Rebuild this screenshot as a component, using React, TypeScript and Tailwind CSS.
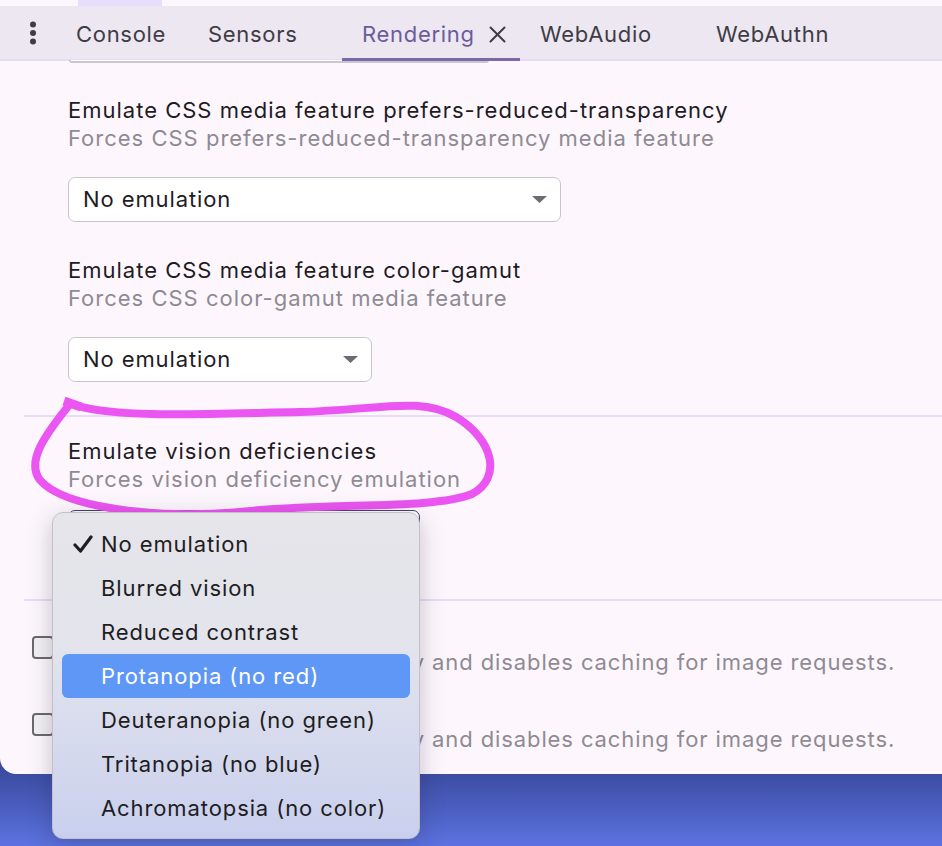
import React from "react";

const font = { fontFamily: "Inter, 'Liberation Sans', sans-serif" };

function Select({ width, focused }: { width: string; focused?: boolean }) {
  return (
    <div
      className={`${width} h-[45px] rounded-[7px] border ${
        focused ? "border-[#4b3f6e]" : "border-[#c9c5cc]"
      } bg-white flex items-center justify-between pl-[14px] pr-[13px]`}
    >
      <span className="text-[22px] text-[#1f1b24] tracking-[0.9px]">No emulation</span>
      <svg width="15" height="8" viewBox="0 0 15 8">
        <path d="M0 0 L15 0 L7.5 7 Z" fill="#6f6b73" />
      </svg>
    </div>
  );
}

function Heading({ title, sub }: { title: string; sub: string }) {
  return (
    <div className="flex flex-col">
      <div className="text-[22px] leading-[28px] text-[#1f1b24] tracking-[1px] whitespace-nowrap">{title}</div>
      <div className="text-[22px] leading-[28px] text-[#8f8a94] tracking-[1px] whitespace-nowrap">{sub}</div>
    </div>
  );
}

function CheckRow({ title, sub }: { title: string; sub: string }) {
  return (
    <div className="flex items-start pl-[32px]">
      <div className="w-[36px] pt-[16px] shrink-0">
        <div className="w-[22px] h-[23px] rounded-[4px] border-2 border-[#6b686e] bg-[#f3f1f3]" />
      </div>
      <div className="flex flex-col">
        <div className="text-[22px] leading-[28px] text-[#1f1b24] tracking-[0.9px] whitespace-nowrap">{title}</div>
        <div className="text-[22px] leading-[28px] text-[#8f8a94] tracking-[0.9px] whitespace-nowrap">{sub}</div>
      </div>
    </div>
  );
}

const items = [
  "No emulation",
  "Blurred vision",
  "Reduced contrast",
  "Protanopia (no red)",
  "Deuteranopia (no green)",
  "Tritanopia (no blue)",
  "Achromatopsia (no color)",
];

export default function App() {
  return (
    <div
      className="relative w-[942px] h-[846px] overflow-hidden bg-[linear-gradient(180deg,#3a4b9f_91%,#5c72e0_100%)]"
      style={font}
    >
      <div className="w-[942px] h-[774px] bg-[#fdf7fd] rounded-bl-[16px] flex flex-col overflow-hidden">
        {/* top strip */}
        <div className="h-[6px] flex shrink-0">
          <div className="ml-[78px] w-[84px] bg-[#e8ddfa]" />
        </div>
        {/* tab bar */}
        <div className="h-[55px] shrink-0 bg-[#ece7f1] border-b-2 border-[#e7dcf8] flex items-stretch text-[22px] tracking-[0.7px] text-[#403c45]">
          <div className="w-[64px] flex items-center justify-center pl-[2px]">
            <svg width="8" height="24" viewBox="0 0 8 24">
              <circle cx="4" cy="3.5" r="3" fill="#403c45" />
              <circle cx="4" cy="12" r="3" fill="#403c45" />
              <circle cx="4" cy="20.5" r="3" fill="#403c45" />
            </svg>
          </div>
          <div className="flex items-center pt-[3px] pl-[12px] w-[144px]">Console</div>
          <div className="flex items-center pt-[3px] w-[134px]">Sensors</div>
          <div className="relative flex items-center pt-[3px] w-[178px] pl-[20px]">
            <span className="text-[#6c5b9b]">Rendering</span>
            <svg className="ml-[14px]" width="17" height="17" viewBox="0 0 17 17">
              <path d="M1.5 1.5 L15.5 15.5 M15.5 1.5 L1.5 15.5" stroke="#403c45" strokeWidth="2" strokeLinecap="round" />
            </svg>
            <div className="absolute left-0 right-0 bottom-[-2px] h-[3px] bg-[#7b68a8]" />
          </div>
          <div className="flex items-center pt-[3px] pl-[20px] w-[196px]">WebAudio</div>
          <div className="flex items-center pt-[3px]">WebAuthn</div>
        </div>

        {/* content */}
        <div className="flex flex-col">
          <div className="ml-[69px] w-[420px] h-[3px] border-b-2 border-x-2 border-[#cac6cd] rounded-b-[6px] -mt-[1px] bg-white" />

          <div className="pl-[68px] pt-[33px] flex flex-col">
            <Heading
              title="Emulate CSS media feature prefers-reduced-transparency"
              sub="Forces CSS prefers-reduced-transparency media feature"
            />
            <div className="mt-[25px]">
              <Select width="w-[493px]" />
            </div>
            <div className="mt-[34px]">
              <Heading title="Emulate CSS media feature color-gamut" sub="Forces CSS color-gamut media feature" />
            </div>
            <div className="mt-[25px]">
              <Select width="w-[304px]" />
            </div>
          </div>

          <div className="ml-[24px] mt-[33px] h-[2px] bg-[#e8dcf8]" />

          <div className="pl-[68px] pt-[20px] flex flex-col">
            <Heading title="Emulate vision deficiencies" sub="Forces vision deficiency emulation" />
            <div className="mt-[17px]">
              <Select width="w-[352px]" focused />
            </div>
          </div>

          <div className="ml-[24px] mt-[44px] h-[2px] bg-[#e8dcf8]" />

          <div className="pt-[19px] flex flex-col">
            <CheckRow
              title="Disable AVIF image format"
              sub="Requires a page reload to apply and disables caching for image requests."
            />
            <div className="mt-[21px]">
              <CheckRow
                title="Disable WebP image format"
                sub="Requires a page reload to apply and disables caching for image requests."
              />
            </div>
          </div>
        </div>
      </div>

      {/* hand-drawn annotation */}
      <svg className="absolute left-0 top-0 pointer-events-none" width="942" height="846" viewBox="0 0 942 846">
        <path
          d="M78 406 C 120 418, 200 414, 300 412 C 380 410, 420 396, 456 417 C 494 440, 502 478, 472 494 C 432 510, 330 502, 240 512 C 150 520, 62 506, 40 480 C 26 462, 44 436, 70 404"
          fill="none"
          stroke="#eb55f1"
          strokeWidth="8"
          strokeLinecap="round"
          strokeLinejoin="round"
        />
        <path d="M64 401 L81 407" stroke="#eb55f1" strokeWidth="9" strokeLinecap="butt" />
      </svg>

      {/* dropdown menu */}
      <div className="absolute left-[52px] top-[512px] w-[368px] h-[327px] rounded-[11px] border border-[#c3c0c8] bg-[linear-gradient(180deg,#e5e5ea_0%,#e3e4ec_40%,#c9d0ee_100%)] shadow-[0_6px_24px_rgba(40,30,60,0.25)] pt-[9px] px-[9px] flex flex-col">
        {items.map((it, i) => (
          <div
            key={it}
            className={`h-[44px] rounded-[6px] flex items-center text-[22px] tracking-[0.9px] ${
              i === 3 ? "bg-[#5e97f6] text-white" : "text-[#1e1d22]"
            }`}
          >
            <div className="w-[39px] flex justify-end pr-[8px]">
              {i === 0 && (
                <svg width="20" height="18" viewBox="0 0 20 18">
                  <path d="M2 10 L7.5 16 L18 2" fill="none" stroke="#1e1d22" strokeWidth="3.2" strokeLinecap="round" strokeLinejoin="round" />
                </svg>
              )}
            </div>
            <span>{it}</span>
          </div>
        ))}
      </div>
    </div>
  );
}
